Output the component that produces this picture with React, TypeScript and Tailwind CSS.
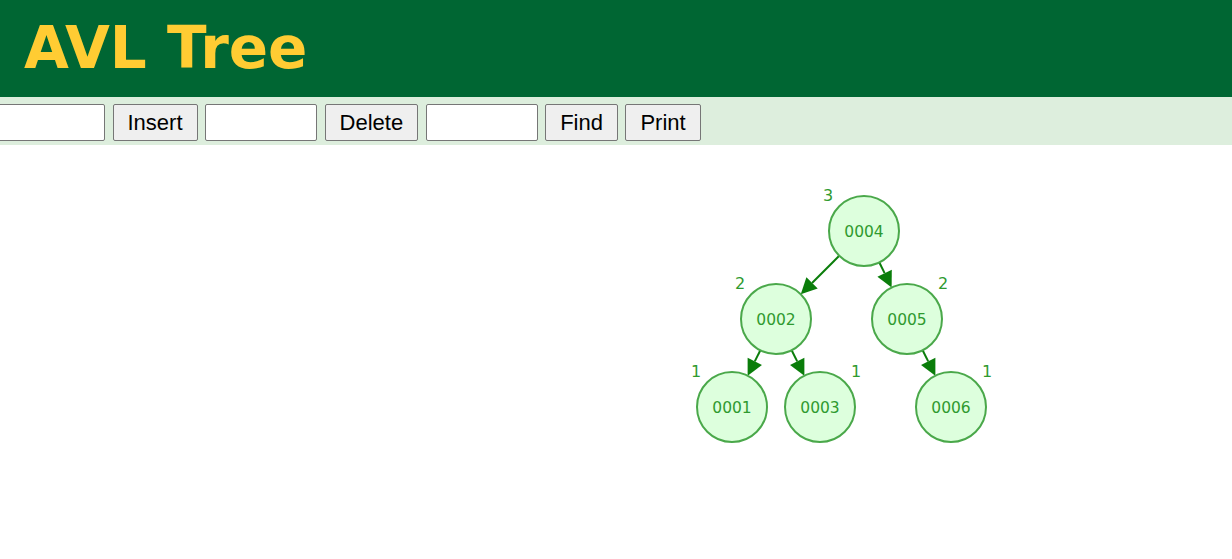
import React from "react";

type TreeNode = { key: string; x: number; y: number; h: number; side: -1 | 1 };

// node centers in page coordinates (svg is placed under the toolbar, top = 145)
const TOP = 145;
const R = 35;

const nodes: TreeNode[] = [
  { key: "0004", x: 864, y: 231, h: 3, side: -1 },
  { key: "0002", x: 776, y: 319, h: 2, side: -1 },
  { key: "0005", x: 907, y: 319, h: 2, side: 1 },
  { key: "0001", x: 732, y: 407, h: 1, side: -1 },
  { key: "0003", x: 820, y: 407, h: 1, side: 1 },
  { key: "0006", x: 951, y: 407, h: 1, side: 1 },
];

const edges: [number, number][] = [
  [0, 1],
  [0, 2],
  [1, 3],
  [1, 4],
  [2, 5],
];

function Edge({ from, to }: { from: TreeNode; to: TreeNode }) {
  const dx = to.x - from.x;
  const dy = to.y - from.y;
  const len = Math.hypot(dx, dy);
  const ux = dx / len;
  const uy = dy / len;
  const sx = from.x + ux * R;
  const sy = from.y - TOP + uy * R;
  const ex = to.x - ux * R;
  const ey = to.y - TOP - uy * R;
  // arrow head
  const hl = 16;
  const hw = 8;
  const bx = ex - ux * hl;
  const by = ey - uy * hl;
  const pts = `${ex},${ey} ${bx - uy * hw},${by + ux * hw} ${bx + uy * hw},${by - ux * hw}`;
  return (
    <g>
      <line x1={sx} y1={sy} x2={bx} y2={by} stroke="#0a7d0a" strokeWidth={2} />
      <polygon points={pts} fill="#0a7d0a" />
    </g>
  );
}

function Tree() {
  return (
    <svg width={1232} height={414} className="block">
      {edges.map(([a, b]) => (
        <Edge key={`${a}-${b}`} from={nodes[a]} to={nodes[b]} />
      ))}
      {nodes.map((n) => (
        <g key={n.key} style={{ fontFamily: "'DejaVu Sans', Verdana, sans-serif" }}>
          <circle cx={n.x} cy={n.y - TOP} r={R} fill="#ddffdd" stroke="#4aa84a" strokeWidth={2} />
          <text
            x={n.x}
            y={n.y - TOP + 6}
            textAnchor="middle"
            fontSize={15.5}
            fill="#2f9a2f"
          >
            {n.key}
          </text>
          <text
            x={n.x + n.side * 36}
            y={n.y - TOP - 30}
            textAnchor="middle"
            fontSize={16}
            fill="#2f9a2f"
          >
            {n.h}
          </text>
        </g>
      ))}
    </svg>
  );
}

const inputCls =
  "w-[112px] h-[37px] bg-white border border-[#767676] rounded-[2px] shrink-0";
const btnCls =
  "h-[37px] px-[14px] bg-[#efefef] border border-[#767676] rounded-[2px] text-[22px] text-black shrink-0 leading-none";

export default function App() {
  return (
    <div className="w-[1232px] h-[559px] overflow-hidden bg-white" style={{ fontFamily: "'Liberation Sans', Arial, sans-serif" }}>
      <div className="h-[97px] bg-[#006633] flex items-center pl-[24px]">
        <h1
          className="text-[58px] font-bold text-[#ffcc33] leading-none pb-[2px]"
          style={{ fontFamily: "'DejaVu Sans', Verdana, sans-serif" }}
        >
          AVL Tree
        </h1>
      </div>
      <div className="h-[48px] bg-[#ddeedd] flex gap-[7.5px] pt-[7px] -ml-[7px]">
        <input className={inputCls} />
        <button className={btnCls}>Insert</button>
        <input className={inputCls} />
        <button className={btnCls}>Delete</button>
        <input className={inputCls} />
        <button className={btnCls}>Find</button>
        <button className={btnCls}>Print</button>
      </div>
      <Tree />
    </div>
  );
}
